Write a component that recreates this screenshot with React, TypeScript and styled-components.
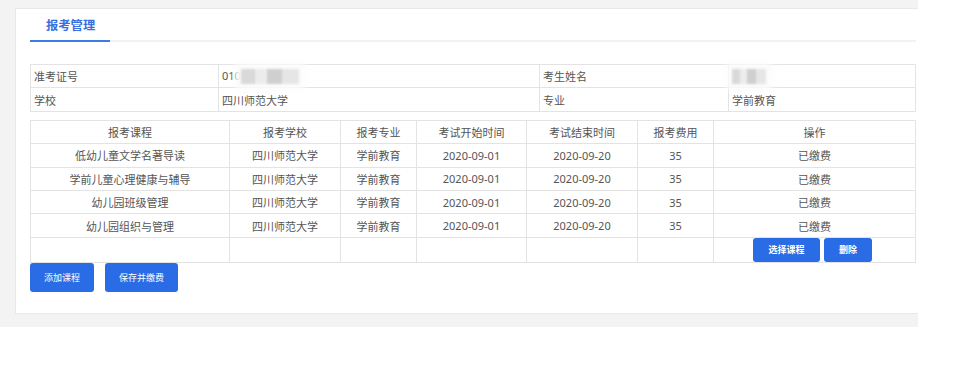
import styled, { createGlobalStyle } from "styled-components"

const GlobalStyle = createGlobalStyle`
    html, body {
        margin: 0;
        padding: 0;
        background: #fff;
    }
    body {
        font-family: "Noto Sans", "Noto Sans CJK SC", sans-serif;
        color: #555;
    }
`

const StyledPage = styled.div`
    width: 918px;
    background-color: #f3f3f3;
    padding: 8px 0 13px 15px;
    box-sizing: border-box;
`

const StyledPanel = styled.div`
    background-color: #fff;
    border: 1px solid #e8e8e8;
    border-right: none;
    padding: 0 2px 21px 14px;
`

const StyledTabBar = styled.div`
    display: flex;
    height: 31px;
    border-bottom: 2px solid #f2f2f2;
`

const StyledTab = styled.div`
    display: flex;
    align-items: center;
    padding: 0 15px 0 16px;
    font-size: 12.3px;
    font-weight: bold;
    color: #3a6fe2;
    border-bottom: 2px solid #3d7ce8;
    margin-bottom: -2px;
`

const StyledTable = styled.table<{ $gap: number }>`
    width: 885px;
    border-collapse: collapse;
    table-layout: fixed;
    margin-top: ${props => props.$gap}px;
    font-size: 11px;
    color: #555;
`

const StyledCell = styled.td<{ $center?: boolean; $h?: number }>`
    border: 1px solid #e3e3e3;
    height: ${props => props.$h ?? 22.4}px;
    padding: 0 3px;
    text-align: ${props => (props.$center ? "center" : "left")};
    white-space: nowrap;
`

const StyledMosaic = styled.span<{ $w: number }>`
    display: inline-block;
    vertical-align: middle;
    width: ${props => props.$w}px;
    height: 15px;
    background: linear-gradient(90deg, #d9d9d9 0 25%, #ececec 25% 45%, #cfcfcf 45% 70%, #e6e6e6 70%);
    filter: blur(1px);
    box-shadow: 0 0 6px 6px #fbfbfb;
`

const StyledBtnRow = styled.div`
    display: flex;
    justify-content: center;
    gap: 4px;
    padding-right: 4px;
`

const StyledSmallBtn = styled.button<{ $w: number }>`
    width: ${props => props.$w}px;
    height: 24px;
    border: none;
    border-radius: 3px;
    background-color: #2a6ce6;
    color: #fff;
    font-family: inherit;
    font-size: 9px;
    font-weight: bold;
    padding: 0;
`

const StyledActions = styled.div`
    display: flex;
    gap: 11px;
`

const StyledMainBtn = styled.button<{ $w: number }>`
    width: ${props => props.$w}px;
    height: 29px;
    border: none;
    border-radius: 3px;
    background-color: #2a6ce6;
    color: #fff;
    font-family: inherit;
    font-size: 9px;
    padding: 0;
`

const infoCols = [188, 321, 189, 187]
const courseCols = [199, 111, 76, 110, 111, 76, 202]

const headers = ["报考课程", "报考学校", "报考专业", "考试开始时间", "考试结束时间", "报考费用", "操作"]

const courses = [
    "低幼儿童文学名著导读",
    "学前儿童心理健康与辅导",
    "幼儿园班级管理",
    "幼儿园组织与管理",
]

function App() {
    return (
        <>
            <GlobalStyle />
            <StyledPage>
                <StyledPanel>
                    <StyledTabBar>
                        <StyledTab>报考管理</StyledTab>
                    </StyledTabBar>

                    <StyledTable $gap={22}>
                        <colgroup>
                            {infoCols.map((w, i) => <col key={i} style={{ width: w }} />)}
                        </colgroup>
                        <tbody>
                            <tr>
                                <StyledCell>准考证号</StyledCell>
                                <StyledCell>010<StyledMosaic $w={58} /></StyledCell>
                                <StyledCell>考生姓名</StyledCell>
                                <StyledCell><StyledMosaic $w={34} /></StyledCell>
                            </tr>
                            <tr>
                                <StyledCell>学校</StyledCell>
                                <StyledCell>四川师范大学</StyledCell>
                                <StyledCell>专业</StyledCell>
                                <StyledCell>学前教育</StyledCell>
                            </tr>
                        </tbody>
                    </StyledTable>

                    <StyledTable $gap={8}>
                        <colgroup>
                            {courseCols.map((w, i) => <col key={i} style={{ width: w }} />)}
                        </colgroup>
                        <tbody>
                            <tr>
                                {headers.map(h => <StyledCell key={h} $center>{h}</StyledCell>)}
                            </tr>
                            {courses.map(c => (
                                <tr key={c}>
                                    <StyledCell $center>{c}</StyledCell>
                                    <StyledCell $center>四川师范大学</StyledCell>
                                    <StyledCell $center>学前教育</StyledCell>
                                    <StyledCell $center>2020-09-01</StyledCell>
                                    <StyledCell $center>2020-09-20</StyledCell>
                                    <StyledCell $center>35</StyledCell>
                                    <StyledCell $center>已缴费</StyledCell>
                                </tr>
                            ))}
                            <tr>
                                <StyledCell $h={24} />
                                <StyledCell $h={24} />
                                <StyledCell $h={24} />
                                <StyledCell $h={24} />
                                <StyledCell $h={24} />
                                <StyledCell $h={24} />
                                <StyledCell $h={24} $center>
                                    <StyledBtnRow>
                                        <StyledSmallBtn $w={67}>选择课程</StyledSmallBtn>
                                        <StyledSmallBtn $w={48}>删除</StyledSmallBtn>
                                    </StyledBtnRow>
                                </StyledCell>
                            </tr>
                        </tbody>
                    </StyledTable>

                    <StyledActions>
                        <StyledMainBtn $w={64}>添加课程</StyledMainBtn>
                        <StyledMainBtn $w={73}>保存并缴费</StyledMainBtn>
                    </StyledActions>
                </StyledPanel>
            </StyledPage>
        </>
    )
}

export default App
